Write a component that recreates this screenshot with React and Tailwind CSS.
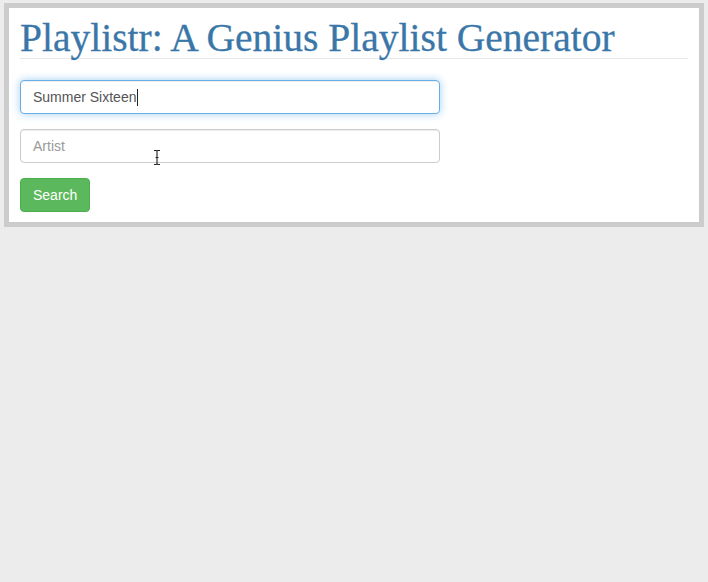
import React from 'react';

const IBeam = () => (
    <svg className="absolute left-[153px] top-[149px]" width="8" height="17" viewBox="0 0 8 17">
        <path d="M1 1.5h2.2l0.8 0.8 0.8-0.8H7M4 2.3v12.4M1 15.5h2.2l0.8-0.8 0.8 0.8H7M2.5 8.5h3" fill="none" stroke="#222" strokeWidth="1.1" />
    </svg>
);

const App = () => {
    return (
        <div className="relative w-full min-h-screen bg-[#ececec] pt-[3px] px-[4px]" style={{ height: 582 }}>
            <div className="border-[5px] border-[#cccccc] bg-white pl-[11px] pr-[11px] pb-[10px]">
                <h1 className="pt-[10px] pb-0 text-[39.5px] leading-[40px] text-[#3a77a8] border-b border-[#e8e8e8] font-['Liberation_Serif',serif] font-normal [-webkit-text-stroke:0.3px_#3a77a8]">
                    Playlistr: A Genius Playlist Generator
                </h1>

                <div className="mt-[21px] w-[420px] h-[34px] rounded-[4px] border border-[#66afe9] bg-white px-[12px] flex items-center text-[14px] text-[#555] font-['Liberation_Sans',sans-serif] shadow-[inset_0_1px_1px_rgba(0,0,0,0.075),0_0_8px_rgba(102,175,233,0.6)]">
                    <span>Summer Sixteen</span>
                    <span className="inline-block w-px h-[17px] bg-[#222] ml-px" />
                </div>

                <div className="mt-[15px] w-[420px] h-[34px] rounded-[4px] border border-[#cccccc] bg-white px-[12px] flex items-center text-[14px] text-[#999] font-['Liberation_Sans',sans-serif] shadow-[inset_0_1px_1px_rgba(0,0,0,0.075)]">
                    Artist
                </div>

                <button className="mt-[15px] h-[34px] px-[12px] rounded-[4px] border border-[#4cae4c] bg-[#5cb85c] text-white text-[14px] font-['Liberation_Sans',sans-serif]">
                    Search
                </button>
            </div>
            <IBeam />
        </div>
    );
};

export default App;
